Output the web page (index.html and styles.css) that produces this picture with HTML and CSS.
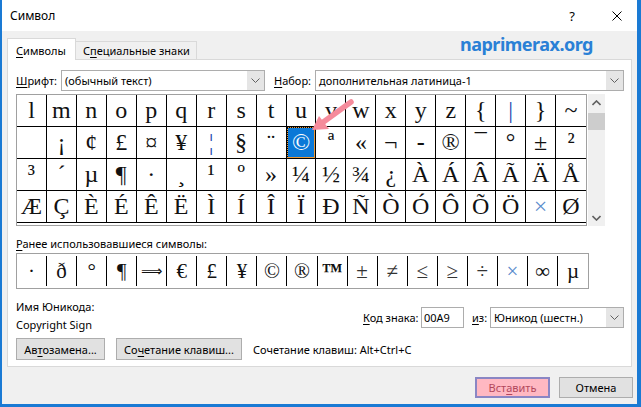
FILE: index.html
```html
<!DOCTYPE html>
<html lang="ru">
<head>
<meta charset="utf-8">
<title>Символ</title>
<link rel="stylesheet" href="styles.css">
</head>
<body>
<div class="window">
  <div class="titlebar">
    <span class="title">Символ</span>
    <span class="help">?</span>
    <svg class="close" width="10" height="10" viewBox="0 0 10 10"><path d="M0.5 0.5L9.5 9.5M9.5 0.5L0.5 9.5" stroke="#000" stroke-width="1"/></svg>
  </div>
  <div class="body">
    <div class="tabrow">
      <div class="tab active"><u>С</u>имволы</div>
      <div class="tab">С<u>п</u>ециальные знаки</div>
      <div class="brand">naprimerax.org</div>
    </div>
    <div class="panel">
      <div class="fontrow">
        <span class="lbl font-lbl"><u>Ш</u>рифт:</span>
        <div class="select font-select"><span class="val">(обычный текст)</span><span class="dd"><svg width="9" height="5" viewBox="0 0 9 5"><path d="M0.5 0.5L4.5 4.5L8.5 0.5" fill="none" stroke="#606060"/></svg></span></div>
        <span class="lbl set-lbl"><u>Н</u>абор:</span>
        <div class="select set-select"><span class="val">дополнительная латиница-1</span><span class="dd"><svg width="9" height="5" viewBox="0 0 9 5"><path d="M0.5 0.5L4.5 4.5L8.5 0.5" fill="none" stroke="#606060"/></svg></span></div>
      </div>
      <div class="gridwrap">
        <div class="grid">
          <div class="c">l</div><div class="c">m</div><div class="c">n</div><div class="c">o</div><div class="c">p</div><div class="c">q</div><div class="c">r</div><div class="c">s</div><div class="c">t</div><div class="c">u</div><div class="c">v</div><div class="c">w</div><div class="c">x</div><div class="c">y</div><div class="c">z</div><div class="c">{</div><div class="c blue">|</div><div class="c">}</div><div class="c">~</div>
          <div class="c">&nbsp;</div><div class="c">¡</div><div class="c">¢</div><div class="c">£</div><div class="c">¤</div><div class="c">¥</div><div class="c blue">¦</div><div class="c">§</div><div class="c">¨</div><div class="c sel">©</div><div class="c">ª</div><div class="c">«</div><div class="c">¬</div><div class="c shy">-</div><div class="c">®</div><div class="c">¯</div><div class="c">°</div><div class="c">±</div><div class="c">²</div>
          <div class="c">³</div><div class="c">´</div><div class="c">µ</div><div class="c">¶</div><div class="c">·</div><div class="c">¸</div><div class="c">¹</div><div class="c">º</div><div class="c">»</div><div class="c">¼</div><div class="c">½</div><div class="c">¾</div><div class="c">¿</div><div class="c">À</div><div class="c">Á</div><div class="c">Â</div><div class="c">Ã</div><div class="c">Ä</div><div class="c">Å</div>
          <div class="c">Æ</div><div class="c">Ç</div><div class="c">È</div><div class="c">É</div><div class="c">Ê</div><div class="c">Ë</div><div class="c">Ì</div><div class="c">Í</div><div class="c">Î</div><div class="c">Ï</div><div class="c">Ð</div><div class="c">Ñ</div><div class="c">Ò</div><div class="c">Ó</div><div class="c">Ô</div><div class="c">Õ</div><div class="c">Ö</div><div class="c light">×</div><div class="c">Ø</div>
        </div>
        <div class="scrollbar">
          <div class="sb-btn"><svg width="9" height="6" viewBox="0 0 9 6"><path d="M0.5 5L4.5 1L8.5 5" fill="none" stroke="#606060" stroke-width="1.6"/></svg></div>
          <div class="thumb"></div>
          <div class="sb-space"></div>
          <div class="sb-btn"><svg width="9" height="6" viewBox="0 0 9 6"><path d="M0.5 1L4.5 5L8.5 1" fill="none" stroke="#606060" stroke-width="1.6"/></svg></div>
        </div>
      </div>
      <div class="recent-lbl"><u>Р</u>анее использовавшиеся символы:</div>
      <div class="recent">
        <div class="r">·</div><div class="r">ð</div><div class="r">°</div><div class="r">¶</div><div class="r arrow">⟹</div><div class="r">€</div><div class="r">£</div><div class="r">¥</div><div class="r">©</div><div class="r">®</div><div class="r tm">™</div><div class="r gray">±</div><div class="r gray">≠</div><div class="r gray">≤</div><div class="r gray">≥</div><div class="r gray">÷</div><div class="r light">×</div><div class="r">∞</div><div class="r">µ</div>
      </div>
      <div class="info">
        <div class="names">
          <div>Имя Юникода:</div>
          <div>Copyright Sign</div>
        </div>
        <div class="code">
          <span class="code-lbl"><u>К</u>од знака:</span>
          <div class="input">00A9</div>
          <span class="from-lbl"><u>и</u>з:</span>
          <div class="select from-select"><span class="val">Юникод (шестн.)</span><span class="dd"><svg width="9" height="5" viewBox="0 0 9 5"><path d="M0.5 0.5L4.5 4.5L8.5 0.5" fill="none" stroke="#606060"/></svg></span></div>
        </div>
      </div>
      <div class="actions">
        <div class="btn auto">Ав<u>т</u>озамена...</div>
        <div class="btn keys">Со<u>ч</u>етание клавиш...</div>
        <span class="shortcut">Сочетание клавиш: Alt+Ctrl+C</span>
      </div>
    </div>
    <div class="footer">
      <div class="btn insert">Вст<u>а</u>вить</div>
      <div class="btn cancel">Отмена</div>
    </div>
  </div>
  <svg class="pointer" width="641" height="407" viewBox="0 0 641 407">
    <path d="M351 102L322 123" stroke="#f58b9b" stroke-width="5.5" stroke-linecap="round"/>
    <path d="M312 130L319 116L329 129Z" fill="#f58b9b"/>
  </svg>
</div>
</body>
</html>
```
FILE: styles.css
```css
html, body {
  margin: 0;
  padding: 0;
}
body {
  font-family: "Noto Sans", "DejaVu Sans", sans-serif;
  font-size: 11px;
  color: #000;
  background: #f0f0f0;
}
u {
  text-decoration: underline;
  text-underline-offset: 2px;
}
.window {
  position: relative;
  width: 641px;
  height: 407px;
  box-sizing: border-box;
  border-left: 2px solid #1a7ad4;
  border-right: 4px solid #1a7ad4;
  border-bottom: 3px solid #1a7ad4;
  background: #f0f0f0;
  display: flex;
  flex-direction: column;
  overflow: hidden;
}
.titlebar {
  height: 31px;
  flex: none;
  background: #fff;
  display: flex;
  align-items: center;
  padding-left: 8px;
}
.title {
  font-size: 12px;
  line-height: 16px;
}
.help {
  margin-left: auto;
  margin-right: 37px;
  font-size: 13px;
}
.close {
  margin-right: 15px;
}
.body {
  flex: 1;
  padding: 0 5px;
  display: flex;
  flex-direction: column;
}
.tabrow {
  display: flex;
  align-items: flex-end;
  height: 21px;
  margin-top: 7px;
  position: relative;
  z-index: 1;
}
.tab {
  box-sizing: border-box;
  border: 1px solid #d9d9d9;
  border-bottom: none;
  line-height: 16px;
  white-space: nowrap;
}
.tab.active {
  width: 69px;
  height: 22px;
  margin-bottom: -1px;
  padding: 4px 0 0 8px;
  background: #fff;
}
.tab:not(.active) {
  width: 122px;
  height: 18px;
  margin-left: -1px;
  padding: 1px 0 0 7px;
  background: #f0f0f0;
}
.brand {
  align-self: flex-start;
  margin-left: auto;
  margin-right: 39px;
  margin-top: -4px;
  font-size: 18px;
  line-height: 20px;
  font-weight: bold;
  color: #2a80d6;
  letter-spacing: -0.5px;
}
.panel {
  box-sizing: border-box;
  height: 308px;
  background: #fff;
  border: 1px solid #d9d9d9;
  padding: 10px 7px 0 8px;
  display: flex;
  flex-direction: column;
}
.fontrow {
  display: flex;
  align-items: center;
  height: 21px;
}
.lbl {
  flex: none;
  white-space: nowrap;
}
.font-lbl {
  width: 45px;
}
.set-lbl {
  width: 41px;
  margin-left: 9px;
}
.select {
  box-sizing: border-box;
  height: 21px;
  border: 1px solid #adadad;
  background: #fff;
  display: flex;
  align-items: center;
}
.select .val {
  padding-left: 3px;
  white-space: nowrap;
}
.select .dd {
  margin-left: auto;
  width: 17px;
  height: 19px;
  background: #e5e5e5;
  display: flex;
  align-items: center;
  justify-content: center;
}
.font-select {
  width: 204px;
}
.set-select {
  width: 309px;
}
.gridwrap {
  display: flex;
  margin-top: 3px;
}
.grid {
  box-sizing: border-box;
  width: 571px;
  border: 1px solid #a0a0a0;
  display: grid;
  grid-template-columns: repeat(19, 1fr);
  grid-auto-rows: 32px;
}
.c {
  box-sizing: border-box;
  border-right: 1px solid #000;
  border-bottom: 1px solid #000;
  font-family: "Liberation Serif", "DejaVu Serif", serif;
  font-size: 24px;
  line-height: 31px;
  text-align: center;
  color: #111;
}
.c:nth-child(19n) {
  border-right: none;
}
.c.sel {
  background: #0a78d7;
  color: #fff;
  box-shadow: inset 0 0 0 1px #e89a3c;
  outline: 1px dotted #000;
  outline-offset: -1px;
}
.c.blue {
  color: #2448b0;
}
.c.light, .r.light {
  color: #5a8ccc;
}
.c.shy {
  font-weight: bold;
}
.scrollbar {
  width: 17px;
  height: 132px;
  margin-left: 1px;
  background: #f0f0f0;
  display: flex;
  flex-direction: column;
}
.sb-btn {
  height: 17px;
  display: flex;
  align-items: center;
  justify-content: center;
}
.thumb {
  height: 17px;
  margin-top: 2px;
  background: #cdcdcd;
}
.sb-space {
  flex: 1;
}
.recent-lbl {
  margin-top: 10px;
  line-height: 16px;
}
.recent {
  box-sizing: border-box;
  width: 573px;
  height: 36px;
  margin-top: 1px;
  border: 1px solid #a0a0a0;
  padding: 2px 0;
  display: grid;
  grid-template-columns: repeat(19, 1fr);
}
.r {
  border-right: 1px solid #000;
  font-family: "Liberation Serif", "DejaVu Serif", serif;
  font-size: 21px;
  line-height: 30px;
  text-align: center;
  color: #111;
}
.r:last-child {
  border-right: none;
}
.r.arrow {
  font-family: "DejaVu Sans", sans-serif;
  font-size: 15px;
}
.r.tm {
  font-weight: bold;
}
.r.gray {
  color: #333;
}
.info {
  display: flex;
  justify-content: space-between;
  margin-top: 9px;
}
.names {
  line-height: 18px;
}
.code {
  display: flex;
  align-items: center;
  margin-top: 9px;
  height: 21px;
}
.code-lbl {
  width: 58px;
  white-space: nowrap;
}
.input {
  box-sizing: border-box;
  width: 43px;
  height: 21px;
  border: 1px solid #adadad;
  padding-left: 2px;
  line-height: 19px;
}
.from-lbl {
  margin-left: 8px;
  width: 18px;
  white-space: nowrap;
}
.from-select {
  width: 134px;
}
.actions {
  display: flex;
  align-items: center;
  margin-top: 4px;
}
.btn {
  box-sizing: border-box;
  height: 22px;
  background: #e1e1e1;
  border: 1px solid #adadad;
  display: flex;
  align-items: center;
  justify-content: center;
  white-space: nowrap;
}
.btn.auto {
  width: 89px;
}
.btn.keys {
  width: 126px;
  margin-left: 11px;
}
.shortcut {
  margin-left: 11px;
}
.footer {
  display: flex;
  justify-content: flex-end;
  gap: 9px;
  margin-top: 10px;
  margin-right: -1px;
}
.footer .btn {
  height: 21px;
}
.btn.insert {
  width: 75px;
  background: #ffb8c2;
  border: 2px solid #8a86c4;
  color: #b2475c;
}
.btn.cancel {
  width: 74px;
}
.pointer {
  position: absolute;
  left: -2px;
  top: 0;
  pointer-events: none;
}
```
